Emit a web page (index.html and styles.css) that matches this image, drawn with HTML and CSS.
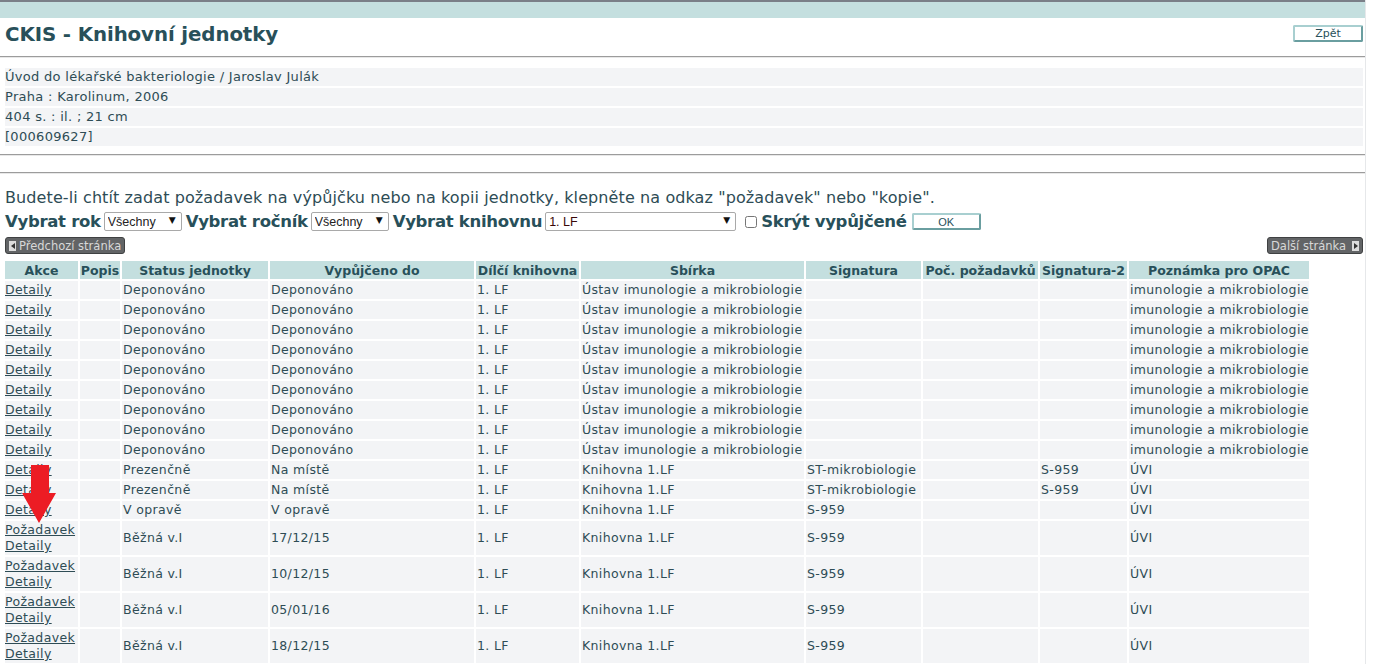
FILE: index.html
```html
<!DOCTYPE html>
<html lang="cs">
<head>
<meta charset="utf-8">
<title>CKIS - Knihovní jednotky</title>
<link rel="stylesheet" href="styles.css">
</head>
<body>
<div class="page">
  <div class="topbar"></div>
  <div class="titlebar">
    <h1 class="title">CKIS - Knihovní jednotky</h1>
    <button class="btn-teal btn-back">Zpět</button>
  </div>
  <div class="rule"></div>
  <div class="info">
    <div class="info-row">Úvod do lékařské bakteriologie / Jaroslav Julák</div>
    <div class="info-row">Praha : Karolinum, 2006</div>
    <div class="info-row">404 s. : il. ; 21 cm</div>
    <div class="info-row">[000609627]</div>
  </div>
  <div class="rule rule-a"></div>
  <div class="rule rule-b"></div>
  <p class="hint">Budete-li chtít zadat požadavek na výpůjčku nebo na kopii jednotky, klepněte na odkaz "požadavek" nebo "kopie".</p>
  <div class="filters">
    <span class="flabel">Vybrat rok</span>
    <span class="sel sel-small"><select><option>Všechny</option></select><span class="arrow">▼</span></span>
    <span class="flabel">Vybrat ročník</span>
    <span class="sel sel-small2"><select><option>Všechny</option></select><span class="arrow">▼</span></span>
    <span class="flabel">Vybrat knihovnu</span>
    <span class="sel sel-wide"><select><option>1. LF</option></select><span class="arrow">▼</span></span>
    <input type="checkbox" class="chk">
    <span class="flabel">Skrýt vypůjčené</span>
    <button class="btn-teal btn-ok">OK</button>
  </div>
  <div class="pager">
    <span class="pbtn"><span class="pico"><span class="tri-l"></span></span>Předchozí stránka</span>
    <span class="pbtn">Další stránka<span class="pico pico-r"><span class="tri-r"></span></span></span>
  </div>
  <table class="units">
    <thead>
      <tr>
        <th class="c-akce">Akce</th>
        <th class="c-popis">Popis</th>
        <th class="c-status">Status jednotky</th>
        <th class="c-vyp">Vypůjčeno do</th>
        <th class="c-dil">Dílčí knihovna</th>
        <th class="c-sb">Sbírka</th>
        <th class="c-sig">Signatura</th>
        <th class="c-poc">Poč. požadavků</th>
        <th class="c-sig2">Signatura-2</th>
        <th class="c-pozn">Poznámka pro OPAC</th>
      </tr>
    </thead>
    <tbody>
      <tr><td><a href="#">Detaily</a></td><td></td><td>Deponováno</td><td>Deponováno</td><td>1. LF</td><td>Ústav imunologie a mikrobiologie</td><td></td><td></td><td></td><td>imunologie a mikrobiologie</td></tr>
      <tr><td><a href="#">Detaily</a></td><td></td><td>Deponováno</td><td>Deponováno</td><td>1. LF</td><td>Ústav imunologie a mikrobiologie</td><td></td><td></td><td></td><td>imunologie a mikrobiologie</td></tr>
      <tr><td><a href="#">Detaily</a></td><td></td><td>Deponováno</td><td>Deponováno</td><td>1. LF</td><td>Ústav imunologie a mikrobiologie</td><td></td><td></td><td></td><td>imunologie a mikrobiologie</td></tr>
      <tr><td><a href="#">Detaily</a></td><td></td><td>Deponováno</td><td>Deponováno</td><td>1. LF</td><td>Ústav imunologie a mikrobiologie</td><td></td><td></td><td></td><td>imunologie a mikrobiologie</td></tr>
      <tr><td><a href="#">Detaily</a></td><td></td><td>Deponováno</td><td>Deponováno</td><td>1. LF</td><td>Ústav imunologie a mikrobiologie</td><td></td><td></td><td></td><td>imunologie a mikrobiologie</td></tr>
      <tr><td><a href="#">Detaily</a></td><td></td><td>Deponováno</td><td>Deponováno</td><td>1. LF</td><td>Ústav imunologie a mikrobiologie</td><td></td><td></td><td></td><td>imunologie a mikrobiologie</td></tr>
      <tr><td><a href="#">Detaily</a></td><td></td><td>Deponováno</td><td>Deponováno</td><td>1. LF</td><td>Ústav imunologie a mikrobiologie</td><td></td><td></td><td></td><td>imunologie a mikrobiologie</td></tr>
      <tr><td><a href="#">Detaily</a></td><td></td><td>Deponováno</td><td>Deponováno</td><td>1. LF</td><td>Ústav imunologie a mikrobiologie</td><td></td><td></td><td></td><td>imunologie a mikrobiologie</td></tr>
      <tr><td><a href="#">Detaily</a></td><td></td><td>Deponováno</td><td>Deponováno</td><td>1. LF</td><td>Ústav imunologie a mikrobiologie</td><td></td><td></td><td></td><td>imunologie a mikrobiologie</td></tr>
      <tr><td><a href="#">Detaily</a></td><td></td><td>Prezenčně</td><td>Na místě</td><td>1. LF</td><td>Knihovna 1.LF</td><td>ST-mikrobiologie</td><td></td><td>S-959</td><td>ÚVI</td></tr>
      <tr><td><a href="#">Detaily</a></td><td></td><td>Prezenčně</td><td>Na místě</td><td>1. LF</td><td>Knihovna 1.LF</td><td>ST-mikrobiologie</td><td></td><td>S-959</td><td>ÚVI</td></tr>
      <tr><td><a href="#">Detaily</a></td><td></td><td>V opravě</td><td>V opravě</td><td>1. LF</td><td>Knihovna 1.LF</td><td>S-959</td><td></td><td></td><td>ÚVI</td></tr>
      <tr><td><a href="#">Požadavek</a><br><a href="#">Detaily</a></td><td></td><td>Běžná v.I</td><td>17/12/15</td><td>1. LF</td><td>Knihovna 1.LF</td><td>S-959</td><td></td><td></td><td>ÚVI</td></tr>
      <tr><td><a href="#">Požadavek</a><br><a href="#">Detaily</a></td><td></td><td>Běžná v.I</td><td>10/12/15</td><td>1. LF</td><td>Knihovna 1.LF</td><td>S-959</td><td></td><td></td><td>ÚVI</td></tr>
      <tr><td><a href="#">Požadavek</a><br><a href="#">Detaily</a></td><td></td><td>Běžná v.I</td><td>05/01/16</td><td>1. LF</td><td>Knihovna 1.LF</td><td>S-959</td><td></td><td></td><td>ÚVI</td></tr>
      <tr><td><a href="#">Požadavek</a><br><a href="#">Detaily</a></td><td></td><td>Běžná v.I</td><td>18/12/15</td><td>1. LF</td><td>Knihovna 1.LF</td><td>S-959</td><td></td><td></td><td>ÚVI</td></tr>
    </tbody>
  </table>
  <svg class="red-arrow" width="36" height="60" viewBox="0 0 36 60" aria-hidden="true">
    <polygon points="10,0 28,0 28,28 35,28 18,58 1,28 10,28" fill="#ec1c24"/>
  </svg>
</div>
</body>
</html>
```

FILE: styles.css
```css
html, body {
  margin: 0;
  padding: 0;
  background: #fff;
}
body {
  font-family: "DejaVu Sans", Verdana, sans-serif;
  color: #2e4c55;
  font-size: 12.5px;
}
.page {
  position: relative;
  width: 1366px;
  border-right: 1px solid #e6e8ea;
  min-height: 664px;
  box-sizing: border-box;
}
.topbar {
  height: 16px;
  border-top: 2px solid #7a7f88;
  background: #c4dfdf;
}
.titlebar {
  display: flex;
  align-items: flex-start;
  justify-content: space-between;
  height: 34px;
  padding: 0 2px 0 5px;
}
.title {
  margin: 5px 0 0 0;
  font-size: 19.8px;
  line-height: 24px;
  font-weight: bold;
  color: #28505a;
  letter-spacing: -0.1px;
}
.btn-teal {
  background: #fff;
  border: 2px solid #6a9ea0;
  border-top-color: #a8cfd0;
  border-left-color: #a8cfd0;
  color: #28505a;
  font-family: "DejaVu Sans", Verdana, sans-serif;
  font-size: 11px;
  padding: 0;
  border-radius: 2px;
}
.btn-back {
  width: 70px;
  height: 17px;
  margin-top: 7px;
}
.rule {
  height: 1px;
  border-top: 1px solid #9c9c9c;
  background: #e8e8e8;
  margin-top: 4px;
}
.info {
  display: flex;
  flex-direction: column;
  gap: 2px;
  margin: 10px 2px 0 5px;
}
.info-row {
  background: #f3f4f6;
  height: 18px;
  line-height: 18px;
  font-size: 13px;
  letter-spacing: 0.3px;
}
.rule-a { margin-top: 8px; }
.rule-b { margin-top: 16px; }
.hint {
  margin: 14px 0 0 5px;
  font-size: 16px;
  letter-spacing: 0.1px;
  line-height: 20px;
  color: #2e4c55;
}
.filters {
  display: flex;
  align-items: center;
  margin: 3px 0 0 5px;
  height: 21px;
}
.flabel {
  font-size: 16.5px;
  font-weight: bold;
  color: #28505a;
  letter-spacing: -0.3px;
}
.sel {
  position: relative;
  display: inline-block;
  margin: 0 4px 0 3px;
}
.sel select {
  appearance: none;
  -webkit-appearance: none;
  border: 1px solid #a9a9a9;
  border-radius: 2px;
  background: #fff;
  height: 19px;
  font-family: "Liberation Sans", Arial, sans-serif;
  font-size: 12.5px;
  color: #222;
  padding: 0 0 0 3px;
  box-sizing: border-box;
  display: block;
}
.sel-small select { width: 78px; }
.sel-small2 select { width: 78px; }
.sel-wide select { width: 191px; color: #3a0808; }
.sel .arrow {
  position: absolute;
  right: 6px;
  top: 3px;
  font-size: 9px;
  color: #111;
  pointer-events: none;
}
.chk {
  width: 12px;
  height: 12px;
  margin: 0 4px 0 5px;
}
.btn-ok {
  width: 69px;
  height: 17px;
  margin-left: 5px;
  font-family: "Liberation Sans", Arial, sans-serif;
  font-size: 11px;
}
.pager {
  display: flex;
  justify-content: space-between;
  margin: 5px 2px 0 5px;
}
.pbtn {
  display: inline-flex;
  align-items: center;
  gap: 2px;
  height: 17px;
  padding: 0 3px;
  box-sizing: border-box;
  background: #626466;
  border: 1px solid #3f4142;
  border-radius: 3px;
  color: #d8d8d8;
  font-size: 11.5px;
}
.pico {
  width: 7px;
  height: 10px;
  background: #dcdcdc;
  display: inline-flex;
  align-items: center;
  justify-content: center;
  margin-right: 1px;
}
.pico-r { margin: 0 0 0 4px; }
.tri-l {
  width: 0; height: 0;
  border-top: 3px solid transparent;
  border-bottom: 3px solid transparent;
  border-right: 4px solid #333;
}
.tri-r {
  width: 0; height: 0;
  border-top: 3px solid transparent;
  border-bottom: 3px solid transparent;
  border-left: 4px solid #333;
}
.units {
  margin: 5px 0 0 3px;
  border-collapse: separate;
  border-spacing: 2px;
  table-layout: fixed;
  width: 1308px;
}
.units th {
  background: #c4dfdf;
  color: #28505a;
  font-weight: bold;
  font-size: 12.5px;
  height: 18px;
  padding: 0;
  white-space: nowrap;
  overflow: hidden;
  text-align: center;
}
.units td {
  background: #f3f4f6;
  padding: 1px 0 1px 1px;
  line-height: 16px;
  font-size: 12.5px;
  letter-spacing: 0.35px;
  white-space: nowrap;
  overflow: hidden;
  vertical-align: middle;
}
.units td:first-child { padding-left: 0; }
.units a { color: #2e4c55; }
.c-akce { width: 73px; }
.c-popis { width: 40px; }
.c-status { width: 146px; }
.c-vyp { width: 204px; }
.c-dil { width: 103px; }
.c-sb { width: 223px; }
.c-sig { width: 115px; }
.c-poc { width: 115px; }
.c-sig2 { width: 87px; }
.c-pozn { width: 180px; }
.red-arrow {
  position: absolute;
  left: 21px;
  top: 465px;
}
```
